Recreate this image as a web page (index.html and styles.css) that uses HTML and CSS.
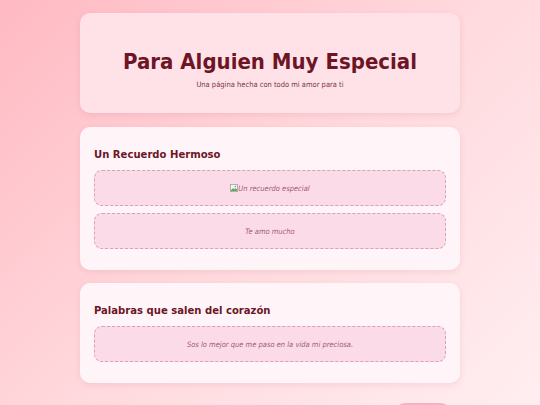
FILE: index.html
```html
<!DOCTYPE html>
<html lang="es">
<head>
    <meta charset="UTF-8">
    <meta name="viewport" content="width=device-width, initial-scale=1.0">
    <title>Para Alguien Muy Especial</title>
    <link rel="stylesheet" href="styles.css">
</head>
<body>

    <div class="container">
        <!-- Header -->
        <header class="hero">
            <h1>Para Alguien Muy Especial</h1>
            <p>Una página hecha con todo mi amor para ti</p>
        </header>

        <!-- Recuerdo -->
        <section class="card">
            <h2>Un Recuerdo Hermoso</h2>
            <div class="note">
                <span class="broken-img">
                    <svg width="8" height="8" viewBox="0 0 9 9">
                        <rect x="0.5" y="0.5" width="8" height="8" fill="#f4f4f4" stroke="#a8a8a8"/>
                        <path d="M1 7 L3.5 4.5 L5 6 L6.5 4.5 L8 6.5 L8 8 L1 8 Z" fill="#6aa84f"/>
                        <circle cx="6" cy="2.8" r="0.9" fill="#5b8bd8"/>
                    </svg>Un recuerdo especial
                </span>
            </div>
            <div class="note">Te amo mucho</div>
        </section>

        <!-- Palabras -->
        <section class="card">
            <h2>Palabras que salen del corazón</h2>
            <div class="note">Sos lo mejor que me paso en la vida mi preciosa.</div>
        </section>

        <div class="actions">
            <button class="love-btn" aria-label="Te quiero"></button>
        </div>
    </div>

</body>
</html>
```

FILE: styles.css
```css
/* General */
* {
    margin: 0;
    padding: 0;
    box-sizing: border-box;
}

html, body {
    height: 100%;
}

body {
    font-family: "DejaVu Sans Condensed", "DejaVu Sans", Verdana, sans-serif;
    font-stretch: condensed;
    background: linear-gradient(135deg, #ffb9c2 0%, #ffd9dd 50%, #ffeef1 100%);
    color: #6d1526;
    padding-top: 13px;
    overflow: hidden;
}

.container {
    width: 380px;
    margin: 0 auto;
}

/* Header */
.hero {
    height: 100px;
    background-color: #ffe2e7;
    border-radius: 10px;
    box-shadow: 0 2px 6px rgba(200, 110, 130, 0.18);
    text-align: center;
    padding-top: 35px;
    margin-bottom: 14px;
}

.hero h1 {
    font-size: 22px;
    line-height: 28px;
    color: #6d1526;
}

.hero p {
    font-size: 7.5px;
    line-height: 10px;
    margin-top: 4px;
    color: #7a3646;
}

/* Cards */
.card {
    background-color: #fff5f8;
    border-radius: 10px;
    box-shadow: 0 2px 6px rgba(200, 110, 130, 0.16);
    padding: 20px 14px 14px;
    margin-bottom: 13px;
}

.card h2 {
    font-size: 11.2px;
    line-height: 16px;
    margin-bottom: 7px;
    color: #6d1526;
}

.note {
    height: 36px;
    display: flex;
    align-items: center;
    justify-content: center;
    background-color: #fcdbe8;
    border: 1px dashed #d9a0b8;
    border-radius: 8px;
    font-size: 7.5px;
    font-style: italic;
    color: #a15a78;
    margin-bottom: 7px;
}

.broken-img {
    display: inline-flex;
    align-items: center;
}

/* Bottom button */
.actions {
    display: flex;
    justify-content: flex-end;
    padding-right: 7px;
    margin-top: 20px;
}

.love-btn {
    width: 60px;
    height: 26px;
    border: none;
    border-radius: 13px;
    background-color: #f7b0c5;
}
```
